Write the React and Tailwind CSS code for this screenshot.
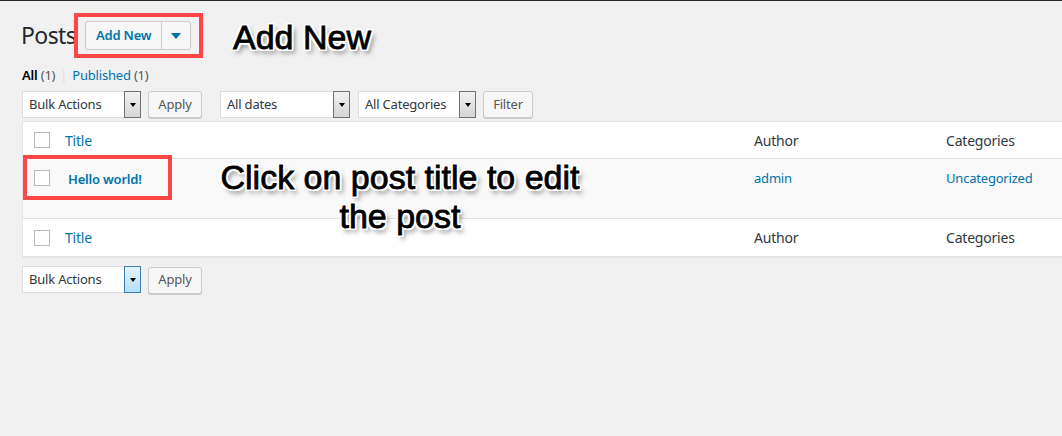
import { useState } from 'react'

const ui = "font-['Noto_Sans',sans-serif] tracking-[-0.2px]"
const callout =
  "font-['Liberation_Sans',Arial,sans-serif] text-black tracking-normal [-webkit-text-stroke:0.8px_#000] [text-shadow:-2px_-2px_0_#fff,2px_-2px_0_#fff,-2px_2px_0_#fff,2px_2px_0_#fff,0_-2px_0_#fff,0_2px_0_#fff,-2px_0_0_#fff,2px_0_0_#fff,3px_4px_5px_rgba(0,0,0,0.55)]"

function Select({ label, width, focused }) {
  return (
    <div
      className={`flex h-[27px] items-stretch bg-white border border-[#ddd] ${width}`}
    >
      <span className="flex-1 flex items-center pl-[6px] text-[13px] text-[#32373c]">{label}</span>
      <span
        className={
          focused
            ? 'w-[17px] flex items-center justify-center border border-[#3c7fb1] bg-gradient-to-b from-[#e5f4fc] to-[#b3dff6] -my-px -mr-px'
            : 'w-[17px] flex items-center justify-center border border-[#707070] bg-gradient-to-b from-[#f2f2f2] to-[#d5d5d5] -my-px -mr-px'
        }
      >
        <span className="w-0 h-0 border-l-[3.5px] border-r-[3.5px] border-t-[4px] border-l-transparent border-r-transparent border-t-black" />
      </span>
    </div>
  )
}

function Btn({ children, width }) {
  return (
    <button className={`h-[27px] ${width} rounded-[3px] border border-[#ccc] bg-[#f7f7f7] shadow-[0_1px_0_#ccc] text-[13px] text-[#555]`}>
      {children}
    </button>
  )
}

function Check() {
  return <span className="block w-4 h-4 bg-white border border-[#b4b9be]" />
}

function HeadRow({ border }) {
  return (
    <div className={`grid grid-cols-[42px_689px_192px_1fr] h-[37px] items-center text-[14px] ${border}`}>
      <div className="pl-[11px]"><Check /></div>
      <a className="text-[#0073aa]">Title</a>
      <span className="text-[#32373c]">Author</span>
      <span className="text-[#32373c]">Categories</span>
    </div>
  )
}

export default function App() {
  const [rows] = useState([{ title: 'Hello world!', author: 'admin', cat: 'Uncategorized' }])

  return (
    <div className={`relative w-[1062px] h-[436px] overflow-hidden bg-[#f1f1f1] border-t border-[#23282d] ${ui}`}>
      <div className="pl-[22px] pt-[20px]">
        <div className="flex items-center h-[29px]">
          <h1 className="-ml-px text-[23px] leading-none text-[#23282d] font-normal tracking-[-0.6px]">Posts</h1>
          <div className="relative ml-[9px] flex h-[29px] rounded-[3px] border border-[#ccc] bg-[#f7f7f7] text-[#0073aa]">
            <span className="w-[76px] flex items-center justify-center text-[13px] font-semibold border-r border-[#ccc]">Add New</span>
            <span className="w-[28px] flex items-center justify-center">
              <span className="w-0 h-0 border-l-[5px] border-r-[5px] border-t-[6px] border-l-transparent border-r-transparent border-t-[#0073aa]" />
            </span>
            <span className="absolute left-[-12px] top-[-9px] w-[129px] h-[45px] border-[4px] border-[#fe4646]" />
          </div>
        </div>

        <div className="mt-[16px] flex items-center gap-[5px] text-[13px] leading-[18px]">
          <span className="text-black font-semibold">All <span className="font-normal text-[#555]">(1)</span></span>
          <span className="text-[#ddd]">|</span>
          <span className="text-[#0073aa]">Published <span className="text-[#555]">(1)</span></span>
        </div>

        <div className="mt-[7px] flex items-center">
          <Select label="Bulk Actions" width="w-[119px]" />
          <div className="ml-[7px]"><Btn width="w-[54px]">Apply</Btn></div>
          <div className="ml-[18px]"><Select label="All dates" width="w-[130px]" /></div>
          <div className="ml-[8px]"><Select label="All Categories" width="w-[118px]" /></div>
          <div className="ml-[7px]"><Btn width="w-[50px]">Filter</Btn></div>
        </div>

        <div className="mt-[3px] bg-white border border-[#e5e5e5] border-r-0 shadow-[0_1px_1px_rgba(0,0,0,0.04)]">
          <HeadRow border="border-b border-[#e1e1e1]" />
          {rows.map((r) => (
            <div key={r.title} className="grid grid-cols-[42px_689px_192px_1fr] h-[60px] bg-[#f9f9f9] border-b border-[#e1e1e1] text-[13px] pt-[11px]">
              <div className="pl-[11px]"><Check /></div>
              <div className="relative">
                <a className="pl-[3px] font-semibold text-[#0073aa] leading-[16px]">{r.title}</a>
                <span className="absolute left-[-42px] top-[-15px] w-[149px] h-[45px] border-[4px] border-[#fe4646]" />
              </div>
              <a className="text-[#0073aa] leading-[16px]">{r.author}</a>
              <a className="text-[#0073aa] leading-[16px]">{r.cat}</a>
            </div>
          ))}
          <HeadRow border="" />
        </div>

        <div className="mt-[9px] flex items-center">
          <Select label="Bulk Actions" width="w-[119px]" focused />
          <div className="ml-[7px]"><Btn width="w-[54px]">Apply</Btn></div>
        </div>
      </div>

      <div className={`absolute left-[233px] top-[13px] text-[34px] leading-[46px] ${callout}`}>Add New</div>
      <div className={`absolute left-[200px] top-[157px] w-[400px] text-center text-[34px] leading-[39px] ${callout}`}>
        Click on post title to edit
        <br />
        the post
      </div>
    </div>
  )
}
